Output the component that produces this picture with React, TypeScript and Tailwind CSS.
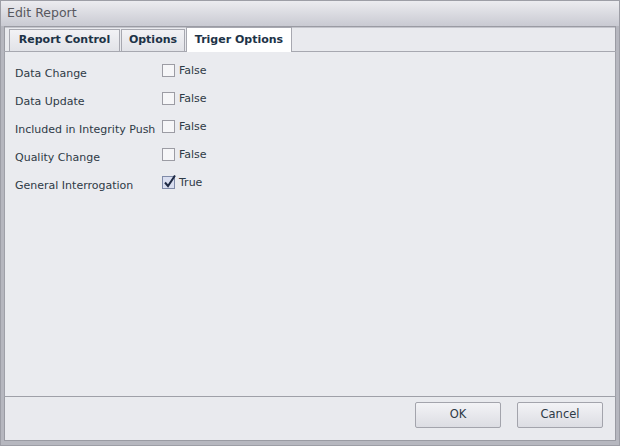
import React from 'react';

const rows = [
  { label: 'Data Change', checked: false },
  { label: 'Data Update', checked: false },
  { label: 'Included in Integrity Push', checked: false },
  { label: 'Quality Change', checked: false },
  { label: 'General Interrogation', checked: true },
];

const font = { fontFamily: '"DejaVu Sans", Tahoma, sans-serif' };

const CheckBox: React.FC<{ checked: boolean }> = ({ checked }) => (
  <div
    className={`relative w-[13px] h-[13px] border ${
      checked ? 'border-[#7f8aa8] bg-[#d9def0]' : 'border-[#9c9ca4] bg-[#f6f6f8]'
    }`}
  >
    {checked && (
      <svg className="absolute -top-[3px] left-0" width="14" height="15" viewBox="0 0 14 15">
        <path d="M2 8.5 L5 12 L12 1.5" fill="none" stroke="#1f2a44" strokeWidth="2" />
      </svg>
    )}
  </div>
);

export default function App() {
  const tabs = [
    { label: 'Report Control', w: 'w-[111px]' },
    { label: 'Options', w: 'w-[64px]' },
    { label: 'Triger Options', w: 'w-[106px]' },
  ];

  return (
    <div className="w-[620px] h-[446px] flex flex-col bg-[#b6b7bf] border border-[#9d9ea6] text-[11px]" style={font}>
      <div className="h-[25px] shrink-0 flex items-center pl-[6px] text-[12.5px] text-[#58585e] bg-gradient-to-b from-[#ececf0] to-[#c9cad2]">
        Edit Report
      </div>
      <div className="flex-1 flex flex-col mx-[3px] mb-[4px] border border-[#9a9ba3] bg-[#e9eaee]">
        <div className="h-[24px] shrink-0 flex items-end pl-[4px] border-t border-[#c4c5cc]">
          {tabs.map((t, i) => {
            const active = i === 2;
            return (
              <div
                key={t.label}
                className={
                  active
                    ? `${t.w} h-[25px] -mb-px flex items-center justify-center whitespace-nowrap bg-white border border-b-0 border-[#a7a8b0] font-bold text-[#1d3347] z-10`
                    : `${t.w} h-[22px] mr-px flex items-center justify-center whitespace-nowrap bg-gradient-to-b from-[#f2f2f5] to-[#e2e3e8] border border-b-0 border-[#a7a8b0] font-bold text-[#1d3347]`
                }
              >
                {t.label}
              </div>
            );
          })}
        </div>
        <div className="flex-1 border-t border-[#a7a8b0] mr-[-1px] -ml-px">
          <div className="h-full border-l border-r border-b border-[#9fa0a8] bg-[#eaebef] pt-[8px] pl-[10px]">
            {rows.map((r) => (
              <div key={r.label} className="h-[28px] flex">
                <div className="w-[147px] pt-[6px] text-[#2e3a46]">{r.label}</div>
                <div className="flex items-start gap-[4px] pt-[4px]">
                  <CheckBox checked={r.checked} />
                  <span className="-mt-[1px] text-[#2e3a46]">{r.checked ? 'True' : 'False'}</span>
                </div>
              </div>
            ))}
          </div>
        </div>
        <div className="h-[43px] shrink-0 flex items-start pt-[5px] justify-end gap-[16px] pr-[12px]">
          {['OK', 'Cancel'].map((b) => (
            <button
              key={b}
              className="w-[86px] h-[26px] rounded-[2px] border border-[#a3a4ac] bg-gradient-to-b from-[#f3f3f6] to-[#dcdde3] text-[#2e3a46] text-[11.5px]"
            >
              {b}
            </button>
          ))}
        </div>
      </div>
    </div>
  );
}
